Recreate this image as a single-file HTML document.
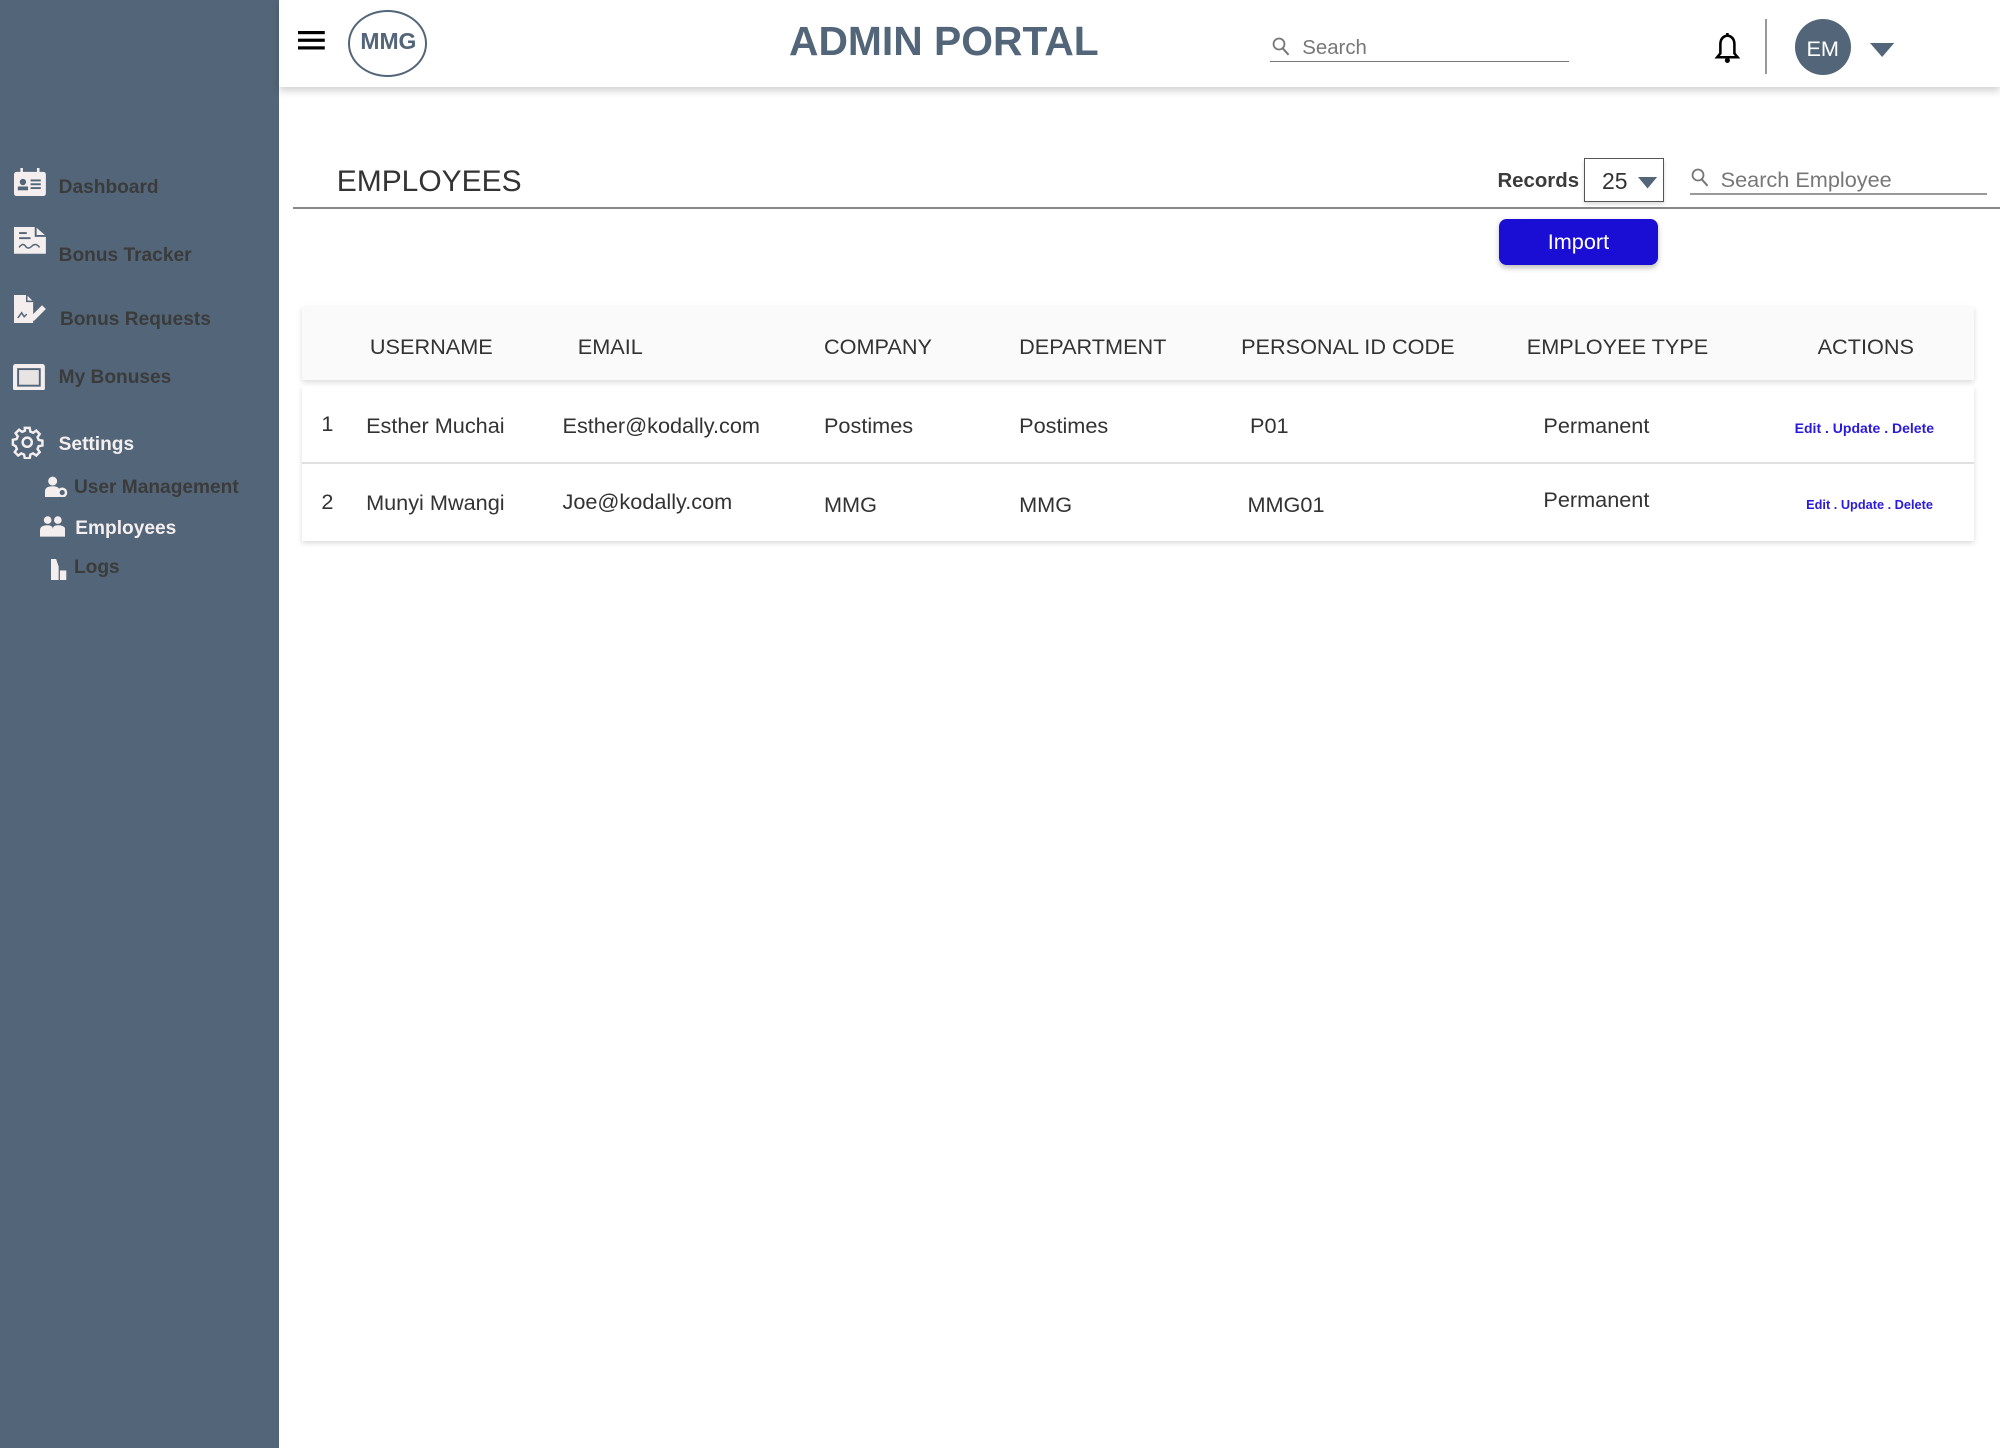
<!DOCTYPE html>
<html><head><meta charset="utf-8">
<style>
html,body{margin:0;padding:0;background:#fff;}
body{zoom:1.27551;width:1568px;height:1135px;position:relative;overflow:hidden;font-family:"Liberation Sans",sans-serif;color:#333;}
.abs{position:absolute;}
#side{left:0;top:0;width:219px;height:1135px;background:#536679;}
.si{position:absolute;font-size:15px;font-weight:bold;color:#3b3b3b;white-space:nowrap;}
.si.w{color:#f4eeee;}
#hdr{left:219px;top:0;width:1349px;height:68px;background:#fff;box-shadow:0 3px 6px rgba(0,0,0,.18);}
.t{position:absolute;white-space:nowrap;}
.th{position:absolute;top:262px;font-size:17px;color:#333;white-space:nowrap;}
.c{position:absolute;font-size:17px;color:#333;white-space:nowrap;}
.lk{position:absolute;font-size:11px;font-weight:bold;color:#2a1adb;white-space:nowrap;}
</style></head><body>
<div id="side" class="abs">
  <svg class="abs" style="left:11px;top:132px" width="25" height="22" viewBox="0 0 25 22"><rect x="0" y="3" width="25" height="19" rx="2" fill="#f4eeee"/><rect x="5" y="0" width="2" height="5" fill="#f4eeee"/><rect x="18" y="0" width="2" height="5" fill="#f4eeee"/><circle cx="7" cy="11" r="2.5" fill="#536679"/><rect x="3" y="14.5" width="8" height="3" fill="#536679"/><rect x="13" y="9" width="8" height="1.5" fill="#536679"/><rect x="13" y="12" width="8" height="1.5" fill="#536679"/><rect x="13" y="15" width="8" height="1.5" fill="#536679"/></svg>
  <div class="si" style="left:46px;top:139px">Dashboard</div>
  <svg class="abs" style="left:11px;top:178px" width="25" height="21" viewBox="0 0 25 21"><path d="M0 0H17L25 7V21H0Z" fill="#f4eeee"/><path d="M17 0V7H25" fill="none" stroke="#536679" stroke-width="1.5"/><rect x="4" y="4" width="6" height="1.5" fill="#536679"/><rect x="4" y="8" width="9" height="1.5" fill="#536679"/><path d="M4 16Q7 12 9 15T14 15T20 16" fill="none" stroke="#536679" stroke-width="1.2"/></svg>
  <div class="si" style="left:46px;top:192px">Bonus Tracker</div>
  <svg class="abs" style="left:11px;top:231px" width="26" height="22" viewBox="0 0 26 22"><path d="M0 0H10L15 5V22H0Z" fill="#f4eeee"/><path d="M10 0V5H15" fill="none" stroke="#536679" stroke-width="1.2"/><path d="M3 18L6 14L8 17L10 15" fill="none" stroke="#536679" stroke-width="1.2"/><path d="M13 17L22 8L25 11L16 20L12 21Z" fill="#f4eeee"/></svg>
  <div class="si" style="left:47px;top:242px">Bonus Requests</div>
  <svg class="abs" style="left:10px;top:285px" width="25" height="21" viewBox="0 0 25 21"><rect x="0" y="0" width="25" height="21" rx="2" fill="#f4eeee"/><rect x="4" y="4" width="17" height="13" fill="#e8e4e4" stroke="#536679" stroke-width="1.5"/></svg>
  <div class="si" style="left:46px;top:288px">My Bonuses</div>
  <svg class="abs" style="left:8px;top:333px" width="27" height="27" viewBox="0 0 24 24"><path fill="none" stroke="#f4eeee" stroke-width="1.7" d="M10.3 2h3.4l.5 2.6 1.9.8 2.2-1.5 2.4 2.4-1.5 2.2.8 1.9 2.6.5v3.4l-2.6.5-.8 1.9 1.5 2.2-2.4 2.4-2.2-1.5-1.9.8-.5 2.6h-3.4l-.5-2.6-1.9-.8-2.2 1.5-2.4-2.4 1.5-2.2-.8-1.9L2 13.7v-3.4l2.6-.5.8-1.9-1.5-2.2 2.4-2.4 2.2 1.5 1.9-.8z"/><circle cx="12" cy="12" r="3.2" fill="none" stroke="#f4eeee" stroke-width="1.7"/></svg>
  <div class="si w" style="left:46px;top:340px">Settings</div>
  <svg class="abs" style="left:35px;top:373px" width="18" height="17" viewBox="0 0 18 17"><circle cx="6" cy="4" r="3.5" fill="#f4eeee"/><path d="M0 17V12Q0 8 6 8Q10 8 11 10V17Z" fill="#f4eeee"/><circle cx="13.5" cy="13" r="3" fill="none" stroke="#f4eeee" stroke-width="2"/></svg>
  <div class="si" style="left:58px;top:374px">User Management</div>
  <svg class="abs" style="left:31px;top:404px" width="20" height="17" viewBox="0 0 20 17"><circle cx="6" cy="4" r="3" fill="#f4eeee"/><circle cx="14" cy="4" r="3" fill="#f4eeee"/><path d="M0 17V12Q0 8 6 8Q10 8 10 11Q10 8 14 8Q20 8 20 12V17Z" fill="#f4eeee"/></svg>
  <div class="si w" style="left:59px;top:406px">Employees</div>
  <svg class="abs" style="left:40px;top:438px" width="13" height="17" viewBox="0 0 13 17"><path d="M0 0H4L6 6V17H0Z" fill="#f4eeee"/><rect x="7" y="9" width="5" height="8" fill="#f4eeee"/></svg>
  <div class="si" style="left:58px;top:437px">Logs</div>
</div>

<div id="hdr" class="abs"></div>
<svg class="abs" style="left:234px;top:24px" width="21" height="15" viewBox="0 0 21 15"><rect y="0" width="21" height="2.5" fill="#000"/><rect y="6" width="21" height="2.5" fill="#000"/><rect y="12" width="21" height="2.5" fill="#000"/></svg>
<div class="abs" style="left:273px;top:8px;width:59px;height:49px;border:2px solid #536679;border-radius:50%;"></div>
<div class="t" style="left:273px;top:22px;width:63px;text-align:center;font-size:18px;font-weight:bold;color:#536679;">MMG</div>
<div class="t" style="left:600px;top:14px;width:280px;text-align:center;font-size:32px;font-weight:bold;color:#536679;">ADMIN PORTAL</div>
<svg class="abs" style="left:997px;top:29px" width="14" height="15" viewBox="0 0 14 15"><circle cx="5.5" cy="5.5" r="4.3" fill="none" stroke="#777" stroke-width="1.4"/><path d="M8.5 9L13 14" stroke="#777" stroke-width="1.6"/></svg>
<div class="t" style="left:1021px;top:29px;font-size:16px;color:#777;">Search</div>
<div class="abs" style="left:996px;top:48px;width:234px;height:1px;background:#777;"></div>
<svg class="abs" style="left:1344px;top:26px" width="21" height="24" viewBox="0 0 21 24"><path d="M10.5 2Q5 3 5 9V16L2.5 19H18.5L16 16V9Q16 3 10.5 2Z" fill="none" stroke="#000" stroke-width="2"/><circle cx="10.5" cy="21.5" r="2" fill="#000"/><rect x="9.5" y="0" width="2" height="3" fill="#000"/></svg>
<div class="abs" style="left:1384px;top:15px;width:1px;height:43px;background:#999;"></div>
<div class="abs" style="left:1407px;top:15px;width:44px;height:44px;border-radius:50%;background:#536679;"></div>
<div class="t" style="left:1407px;top:28px;width:44px;text-align:center;font-size:17px;color:#fff;">EM</div>
<svg class="abs" style="left:1466px;top:34px" width="19" height="11" viewBox="0 0 19 11"><path d="M0 0H19L9.5 11Z" fill="#536679"/></svg>

<div class="t" style="left:264px;top:129px;font-size:23.5px;color:#333;">EMPLOYEES</div>
<div class="abs" style="left:230px;top:162px;width:1338px;height:1.5px;background:#888;"></div>
<div class="t" style="left:1174px;top:133px;font-size:16px;font-weight:bold;color:#3b3b3b;">Records</div>
<div class="abs" style="left:1242px;top:124px;width:61px;height:33px;border:1px solid #555;box-shadow:0 2px 3px rgba(0,0,0,.15);"></div>
<div class="t" style="left:1256px;top:132px;font-size:18px;color:#333;">25</div>
<svg class="abs" style="left:1284px;top:139px" width="15" height="9" viewBox="0 0 15 9"><path d="M0 0H15L7.5 9Z" fill="#536679"/></svg>
<svg class="abs" style="left:1326px;top:132px" width="14" height="15" viewBox="0 0 14 15"><circle cx="5.5" cy="5.5" r="4.3" fill="none" stroke="#777" stroke-width="1.4"/><path d="M8.5 9L13 14" stroke="#777" stroke-width="1.6"/></svg>
<div class="t" style="left:1349px;top:131px;font-size:17px;color:#777;">Search Employee</div>
<div class="abs" style="left:1325px;top:151px;width:233px;height:1.5px;background:#999;"></div>
<div class="abs" style="left:1175px;top:172px;width:125px;height:36px;border-radius:6px;background:#1a0dd4;box-shadow:0 2px 4px rgba(0,0,0,.25);color:#fff;font-size:17px;text-align:center;line-height:36px;">Import</div>

<div class="abs" style="left:237px;top:240px;width:1311px;height:58px;background:#fafafa;box-shadow:0 2px 4px rgba(0,0,0,.15);"></div>
<div class="th" style="left:290px">USERNAME</div>
<div class="th" style="left:453px">EMAIL</div>
<div class="th" style="left:646px">COMPANY</div>
<div class="th" style="left:799px">DEPARTMENT</div>
<div class="th" style="left:973px">PERSONAL ID CODE</div>
<div class="th" style="left:1197px">EMPLOYEE TYPE</div>
<div class="th" style="left:1425px">ACTIONS</div>

<div class="abs" style="left:237px;top:303px;width:1311px;height:121px;background:#fff;box-shadow:0 2px 4px rgba(0,0,0,.15);"></div>
<div class="abs" style="left:237px;top:362px;width:1311px;height:2px;background:#e0e0e0;"></div>
<div class="c" style="left:252px;top:322px">1</div>
<div class="c" style="left:287px;top:324px">Esther Muchai</div>
<div class="c" style="left:441px;top:324px">Esther@kodally.com</div>
<div class="c" style="left:646px;top:324px">Postimes</div>
<div class="c" style="left:799px;top:324px">Postimes</div>
<div class="c" style="left:980px;top:324px">P01</div>
<div class="c" style="left:1210px;top:324px">Permanent</div>
<div class="lk" style="left:1407px;top:329px">Edit . Update . Delete</div>
<div class="c" style="left:252px;top:383px">2</div>
<div class="c" style="left:287px;top:384px">Munyi Mwangi</div>
<div class="c" style="left:441px;top:383px">Joe@kodally.com</div>
<div class="c" style="left:646px;top:386px">MMG</div>
<div class="c" style="left:799px;top:386px">MMG</div>
<div class="c" style="left:978px;top:386px">MMG01</div>
<div class="c" style="left:1210px;top:382px">Permanent</div>
<div class="lk" style="left:1416px;top:390px;font-size:10px">Edit . Update . Delete</div>
</body></html>
